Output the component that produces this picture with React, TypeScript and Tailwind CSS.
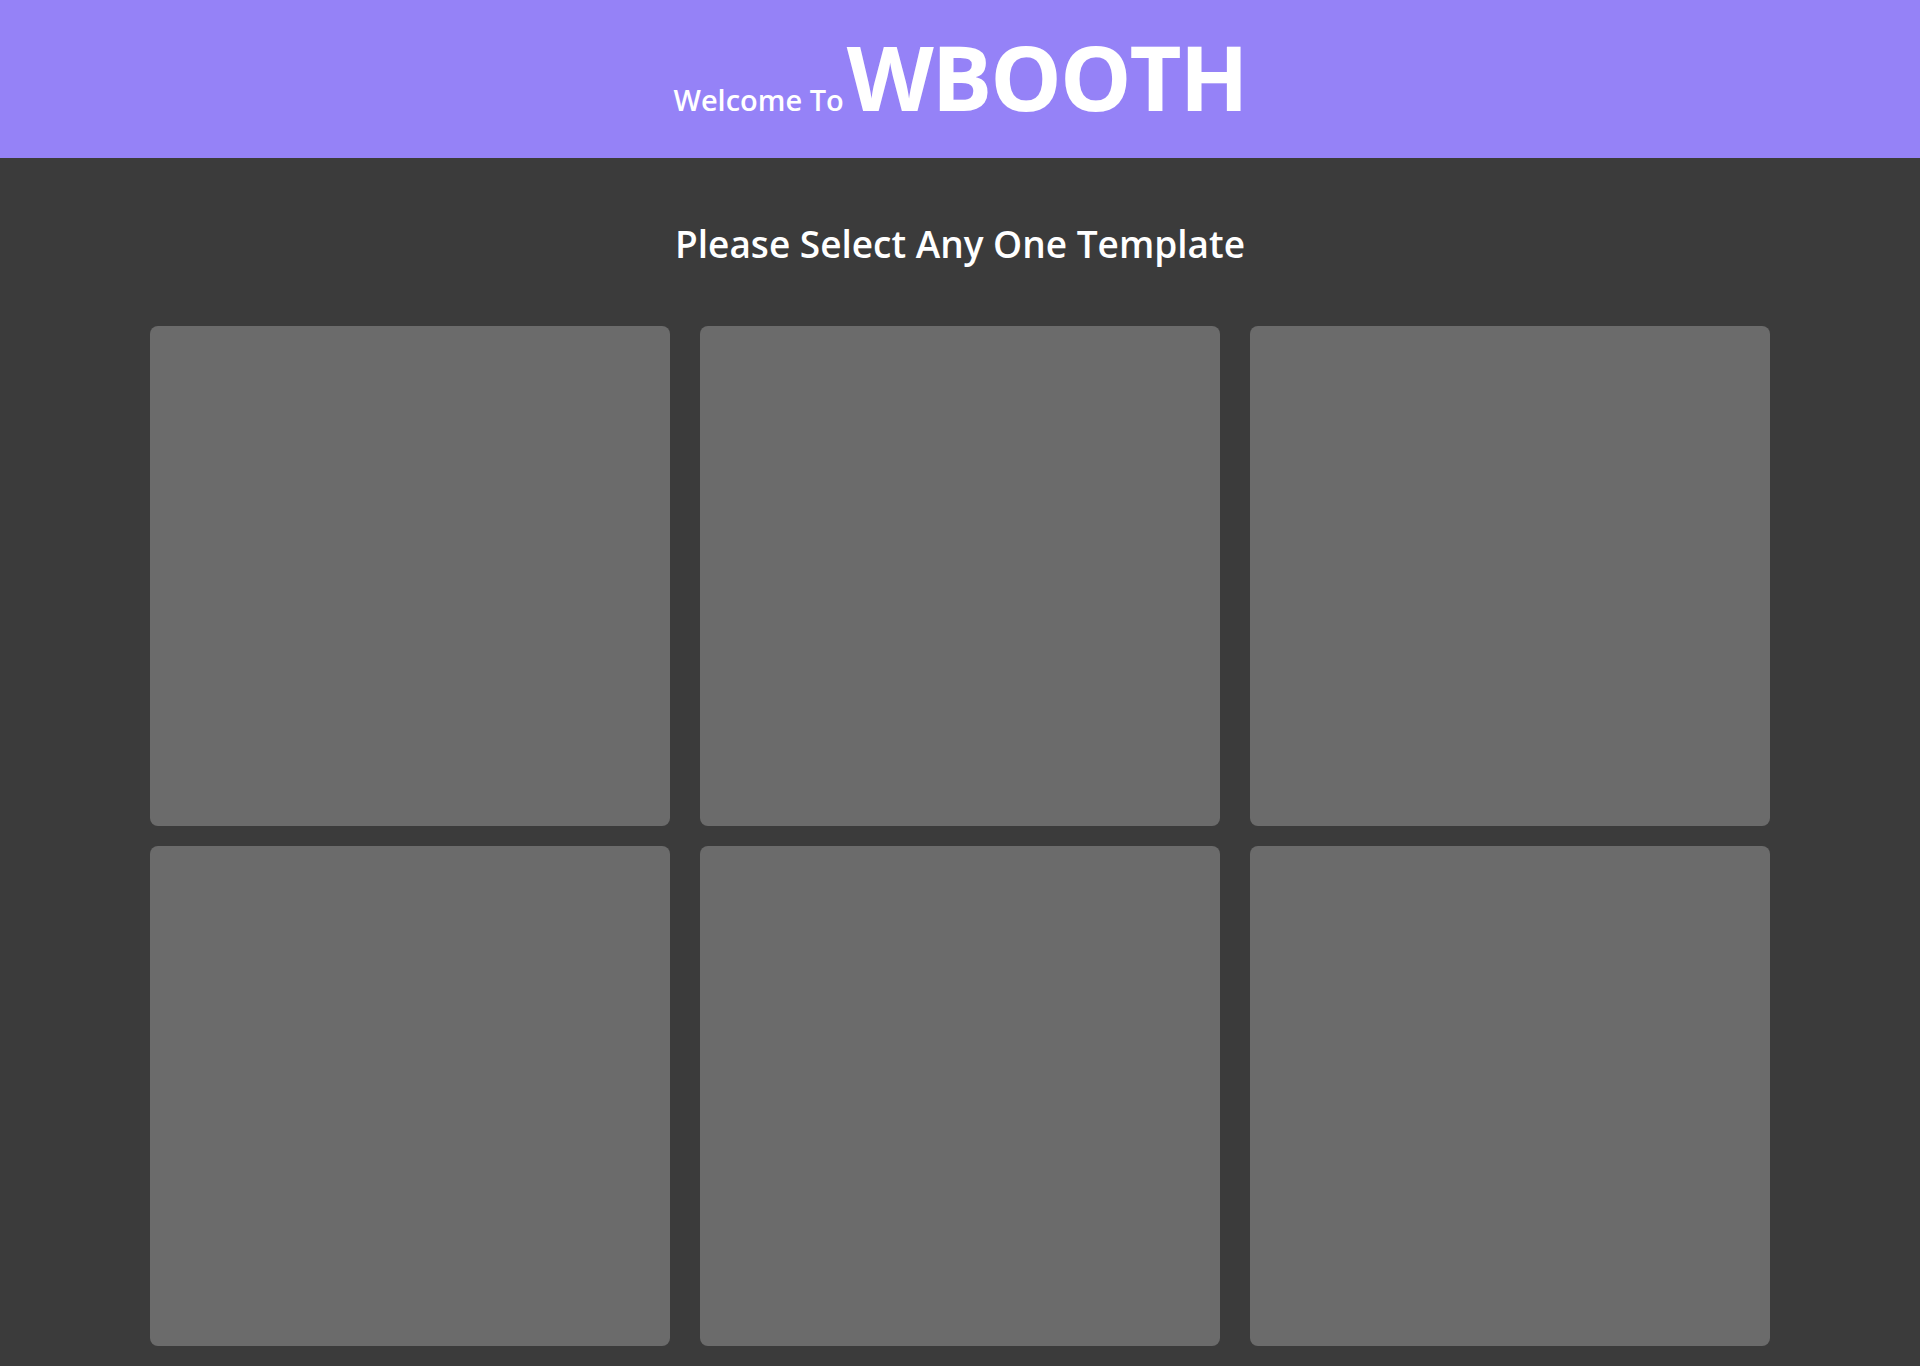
export default function App() {
  const templates = [1, 2, 3, 4, 5, 6];

  return (
    <div
      className="min-h-[1366px] w-full bg-[#3b3b3b]"
      style={{ fontFamily: '"Open Sans", "Noto Sans", sans-serif' }}
    >
      <header className="flex h-[158px] items-baseline justify-center bg-[#9582f7] pt-[31px] text-white">
        <span className="text-[29px] font-semibold leading-none">Welcome To</span>
        <h1 className="ml-[3px] text-[90px] font-bold leading-none tracking-[-2px]">WBOOTH</h1>
      </header>

      <main className="flex flex-col items-center pt-[67px]">
        <h2 className="text-[37px] font-semibold leading-none text-white">
          Please Select Any One Template
        </h2>

        <div className="mt-[64px] grid grid-cols-[repeat(3,520px)] gap-x-[30px] gap-y-[20px]">
          {templates.map((t) => (
            <button
              key={t}
              className="h-[500px] w-[520px] rounded-lg bg-[#6b6b6b]"
              aria-label={`Template ${t}`}
            />
          ))}
        </div>
      </main>
    </div>
  );
}
